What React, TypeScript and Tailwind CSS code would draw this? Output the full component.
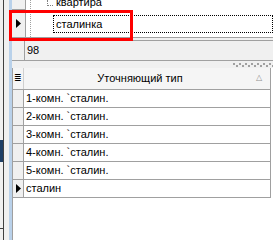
import React from "react";

const rows = ["1-комн. `сталин.", "2-комн. `сталин.", "3-комн. `сталин.", "4-комн. `сталин.", "5-комн. `сталин.", "сталин"];

function Arrow() {
  return (
    <svg width="5" height="9" viewBox="0 0 5 9" className="block">
      <path d="M0 0 L5 4.5 L0 9 Z" fill="#000" />
    </svg>
  );
}

function Grip() {
  // two staggered rows of small dots, the splitter handle
  return (
    <svg width="40" height="4" viewBox="0 0 40 4" className="block">
      {Array.from({ length: 7 }).map((_, i) => (
        <rect key={"a" + i} x={i * 6} y={0} width={2} height={2} fill="#a0a0a0" />
      ))}
      {Array.from({ length: 7 }).map((_, i) => (
        <rect key={"b" + i} x={i * 6 + 3} y={2} width={2} height={2} fill="#a0a0a0" />
      ))}
    </svg>
  );
}

export default function App() {
  return (
    <div className="relative flex h-[240px] w-[273px] overflow-hidden bg-white font-['Liberation_Sans',Arial,sans-serif] text-[11px] leading-none text-black">
      {/* left edge: neighbouring window + splitter */}
      <div className="flex h-full w-[12px] shrink-0">
        <div className="flex w-[3px] flex-col bg-[#f0f0f0]">
          <div className="h-[140px]" />
          <div className="h-[22px] bg-[#1e3f66]" />
          <div className="h-[66px]" />
          <div className="h-[1px] bg-[#404040]" />
        </div>
        <div className="w-[1px] bg-[#404040]" />
        <div className="w-[5px] bg-[#f0f0f0]" />
        <div className="w-[3px] bg-[#b9d1ea]" />
      </div>

      <div className="flex min-w-0 flex-1 flex-col">
        {/* top tree grid */}
        <div className="flex h-[38px] shrink-0 overflow-hidden border-b border-[#a0a0a0]">
          <div className="flex w-[14px] shrink-0 flex-col border-r border-[#a0a0a0] bg-[#f0f0f0]">
            <div className="h-[10px] border-b border-[#a0a0a0]" />
            <div className="flex flex-1 items-center justify-center pb-[1px]">
              <Arrow />
            </div>
          </div>
          <div className="relative flex flex-1 flex-col">
            <div className="absolute left-[4px] top-0 h-full border-l border-dotted border-[#a0a0a0]" />
            <div className="flex h-[10px] items-end">
              <div className="ml-[21px] h-[6px] self-start border-l border-b border-dotted border-[#808080] w-[6px]" />
              <span className="mb-[1px] ml-[3px] -translate-y-[1px]">квартира</span>
            </div>
            <div className="ml-[27px] mt-[5px] flex h-[18px] items-center border border-dotted border-black pl-[2px]">
              сталинка
            </div>
          </div>
        </div>

        {/* footer value panel */}
        <div className="flex h-[22px] shrink-0 border-t-2 border-[#f0f0f0] bg-[#f0f0f0]">
          <div className="w-[13px] border-r border-[#a0a0a0]" />
          <div className="flex flex-1 items-center border-t border-[#a0a0a0] pl-[2px]">98</div>
        </div>

        {/* splitter */}
        <div className="flex h-[8px] shrink-0 flex-col border-t border-[#a0a0a0] bg-[#f0f0f0]">
          <div className="flex justify-end pt-[2px]">
            <Grip />
          </div>
        </div>

        {/* bottom grid */}
        <div className="flex flex-1 flex-col border-l border-[#a0a0a0]">
          <div className="mr-[2px] border-r border-[#a0a0a0]">
            <div className="flex h-[22px] border-b border-[#a0a0a0] bg-[#f5f5f5]">
              <div className="flex w-[11px] items-center justify-center border-r border-[#d0d0d0]">
                <span className="text-[9px]">≣</span>
              </div>
              <div className="relative flex flex-1 items-center justify-center pr-[14px]">
                Уточняющий тип
                <span className="absolute right-[8px] top-[6px] text-[8px] text-[#909090]">△</span>
              </div>
            </div>
            {rows.map((r, i) => (
              <div key={r} className="flex h-[18px] border-b border-[#a0a0a0]">
                <div className="flex w-[11px] items-center justify-center border-r border-[#a0a0a0] bg-[#f0f0f0]">
                  {i === rows.length - 1 && <Arrow />}
                </div>
                <div className="flex flex-1 items-center pl-[2px]">{r}</div>
              </div>
            ))}
          </div>
        </div>
      </div>

      {/* red highlight annotation */}
      <div className="pointer-events-none absolute left-[9px] top-[10px] h-[31px] w-[124px] border-[3px] border-[#ff0000]" />
    </div>
  );
}
